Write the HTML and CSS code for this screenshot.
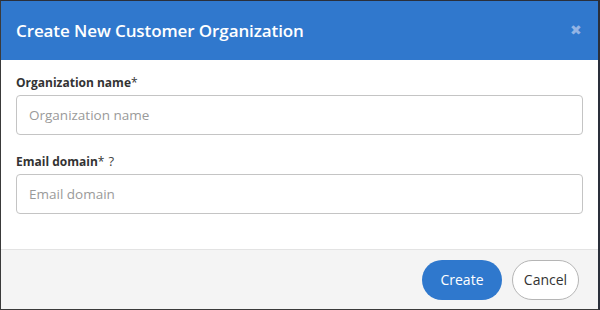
FILE: index.html
```html
<!DOCTYPE html>
<html>
<head>
<meta charset="utf-8">
<link rel="stylesheet" href="styles.css">
</head>
<body>
<div class="dialog">
  <div class="header">
    <h1 class="title">Create New Customer Organization</h1>
    <span class="close">&#x2716;</span>
  </div>
  <div class="content">
    <label class="label">Organization name<span class="req">*</span></label>
    <div class="input">Organization name</div>
    <label class="label">Email domain<span class="req">*</span> <span class="help">?</span></label>
    <div class="input">Email domain</div>
  </div>
  <div class="footer">
    <button class="btn primary">Create</button>
    <button class="btn secondary">Cancel</button>
  </div>
</div>
</body>
</html>
```
FILE: styles.css
```css
html, body { margin: 0; padding: 0; }
body {
  width: 600px;
  height: 310px;
  background: #2b2b2b;
  font-family: "Open Sans", "Noto Sans", sans-serif;
}
.dialog {
  box-sizing: border-box;
  width: 600px;
  height: 310px;
  border-top: 1px solid #2a2f3a;
  border-left: 1px solid #3a3a3a;
  border-right: 2px solid #2a2f3a;
  border-bottom: 1px solid #3a3a3a;
  background: #fff;
  display: flex;
  flex-direction: column;
}
.header {
  height: 59px;
  background: #3078cd;
  display: flex;
  align-items: center;
  justify-content: space-between;
  padding: 0 16px 0 15px;
  flex-shrink: 0;
}
.title {
  margin: 0;
  color: #fff;
  font-size: 17px;
  font-weight: 600;
  letter-spacing: -0.1px;
}
.close {
  color: #93b4e4;
  font-size: 14px;
  margin-top: -3px;
}
.content {
  flex: 1;
  padding: 15px 15px 0 15px;
  display: flex;
  flex-direction: column;
  border-bottom: 1px solid #e3e3e3;
}
.label {
  font-size: 12px;
  font-weight: 700;
  color: #333;
  margin-bottom: 4px;
  line-height: 16px;
}
.req { font-weight: 400; }
.help { font-weight: 400; color: #444; font-size: 13px; line-height: 16px; margin-left: 1px; }
.input {
  box-sizing: border-box;
  height: 40px;
  border: 1px solid #c4c4c4;
  border-radius: 4px;
  padding: 0 12px;
  display: flex;
  align-items: center;
  font-size: 13.5px;
  color: #9a9a9a;
  margin-bottom: 18px;
}
.footer {
  height: 59px;
  background: #f4f4f4;
  display: flex;
  align-items: center;
  justify-content: flex-end;
  padding: 0 19px 0 0;
  gap: 10px;
  flex-shrink: 0;
}
.btn {
  height: 40px;
  border-radius: 20px;
  font-family: inherit;
  font-size: 14px;
  padding: 0;
}
.primary {
  width: 80px;
  background: #2f78cd;
  border: none;
  color: #fff;
}
.secondary {
  width: 67px;
  background: #fff;
  border: 1px solid #b5b5b5;
  color: #333;
}
```
